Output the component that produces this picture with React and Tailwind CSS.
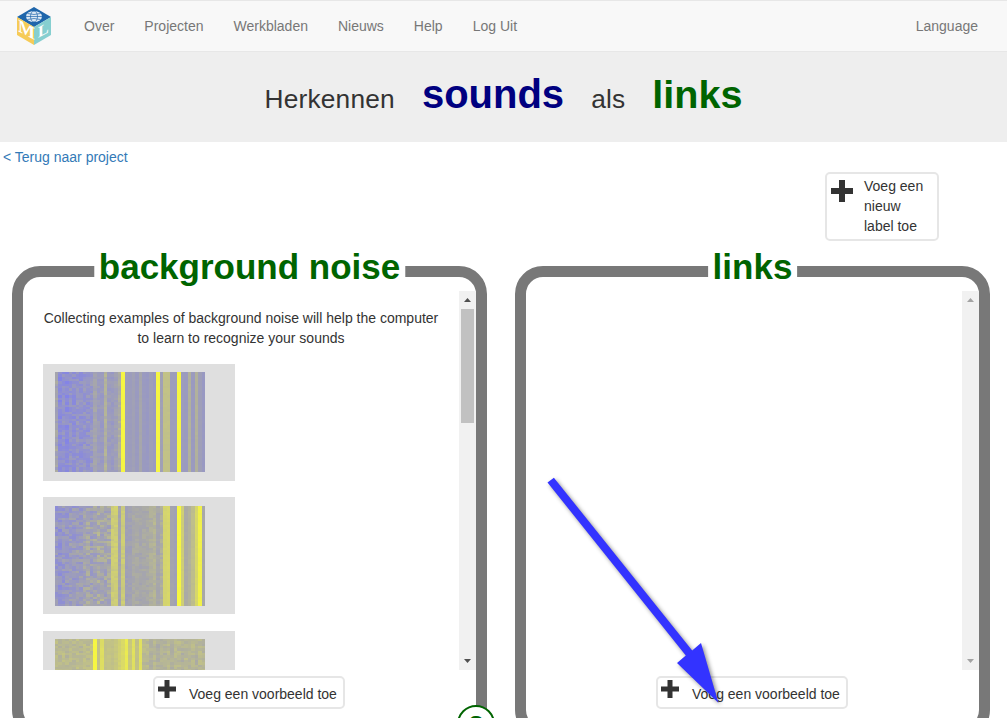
import React from "react";

const FONT = { fontFamily: '"Liberation Sans", Arial, sans-serif' };

function mulberry(seed) {
  let a = seed;
  return () => {
    a = (a + 0x6d2b79f5) | 0;
    let t = Math.imul(a ^ (a >>> 15), 1 | a);
    t = (t + Math.imul(t ^ (t >>> 7), 61 | t)) ^ t;
    return ((t ^ (t >>> 14)) >>> 0) / 4294967296;
  };
}

function mix(t) {
  t = Math.max(0, Math.min(1, t));
  const lo = [120, 120, 250];
  const mid = [168, 168, 168];
  const hi = [246, 246, 66];
  const [a, b, k] = t < 0.5 ? [lo, mid, t * 2] : [mid, hi, (t - 0.5) * 2];
  const c = a.map((v, i) => Math.round(v + (b[i] - v) * k));
  return `rgb(${c[0]},${c[1]},${c[2]})`;
}

const SPECS = [
  {
    seed: 11,
    cols: [0.46, 0.22, 0.28, 0.22, 0.3, 0.26, 0.32, 0.28, 0.32, 0.3, 0.34, 0.46, 0.38, 0.36, 0.56, 0.38, 0.36, 0.42, 0.54, 1, 0.4, 0.38, 0.42, 0.36, 0.48, 0.36, 0.34, 0.4, 0.36, 1, 0.42, 0.66, 0.66, 0.38, 0.38, 1, 0.38, 0.36, 0.56, 0.36, 0.56, 0.4, 0.34],
    noise: (i) => (i < 11 ? 0.2 : i < 19 ? 0.1 : 0.02),
  },
  {
    seed: 23,
    cols: [0.32, 0.3, 0.34, 0.34, 0.38, 0.36, 0.4, 0.38, 0.44, 0.46, 0.42, 0.46, 0.5, 0.48, 0.46, 0.48, 0.72, 0.74, 0.46, 0.72, 0.42, 0.44, 0.5, 0.5, 0.48, 0.5, 0.5, 0.54, 0.58, 0.48, 0.54, 0.78, 0.8, 0.46, 0.42, 1, 0.74, 0.52, 0.56, 0.64, 0.8, 0.96, 0.5],
    noise: (i) => (i < 16 ? 0.24 : i < 31 ? 0.08 : 0.02),
  },
  {
    seed: 37,
    cols: [0.62, 0.6, 0.63, 0.6, 0.62, 0.6, 0.63, 0.6, 0.63, 0.62, 0.64, 1, 0.66, 0.84, 0.66, 0.68, 0.66, 0.7, 0.76, 0.82, 0.92, 0.7, 0.86, 0.66, 0.86, 0.62, 0.6, 0.56, 0.6, 0.54, 0.58, 0.56, 0.6, 0.56, 0.6, 0.6, 0.56, 0.6, 0.58, 0.6, 0.56, 0.6, 0.58],
    noise: (i) => (i < 11 ? 0.1 : i < 25 ? 0.03 : 0.1),
  },
];

function Spectrogram({ spec }) {
  const rand = mulberry(spec.seed);
  const rects = [];
  const w = 150 / 43;
  const h = 100 / 43;
  for (let c = 0; c < 43; c++) {
    for (let r = 0; r < 43; r++) {
      const t = spec.cols[c] + (rand() - 0.5) * spec.noise(c);
      rects.push(
        <rect key={`${c}-${r}`} x={c * w} y={r * h} width={w + 0.2} height={h + 0.2} fill={mix(t)} />
      );
    }
  }
  return (
    <svg width="150" height="100" viewBox="0 0 150 100" className="block" shapeRendering="crispEdges">
      {rects}
    </svg>
  );
}

function Plus({ size, thick }) {
  const a = (size - thick) / 2;
  return (
    <svg width={size} height={size} viewBox={`0 0 ${size} ${size}`} className="block shrink-0">
      <rect x={a} y="0" width={thick} height={size} fill="#333" />
      <rect x="0" y={a} width={size} height={thick} fill="#333" />
    </svg>
  );
}

function AddExample() {
  return (
    <button className="w-[192px] h-[33px] -ml-[1px] bg-white border-2 border-[#e6e6e6] rounded-[5px] flex items-start pl-[3px] text-[14px] text-[#333] leading-5">
      <span className="mt-[2px]">
        <Plus size={18} thick={5} />
      </span>
      <span className="ml-[13px] mt-[6px] whitespace-nowrap">Voeg een voorbeeld toe</span>
    </button>
  );
}

function Arrow({ up, dark }) {
  return (
    <svg width="7" height="4" viewBox="0 0 7 4" className="block">
      <polygon points={up ? "3.5,0 7,4 0,4" : "0,0 7,0 3.5,4"} fill={dark ? "#505050" : "#a3a3a3"} />
    </svg>
  );
}

function Scrollbar({ thumb }) {
  return (
    <div className="w-[17px] h-full bg-[#f1f1f1] flex flex-col items-center shrink-0">
      <div className="h-[18px] pt-[7px]">
        <Arrow up dark={thumb} />
      </div>
      <div className="flex-1 w-[13px]">
        {thumb && <div className="w-[13px] h-[114px] bg-[#c1c1c1]" />}
      </div>
      <div className="h-[18px] pt-[7px]">
        <Arrow dark={thumb} />
      </div>
    </div>
  );
}

function Panel({ title, children, thumb }) {
  return (
    <div className="relative h-[472px] border-[11px] border-[#787878] rounded-[28px] flex flex-col items-center">
      <h2 className="absolute left-1/2 -translate-x-1/2 -top-[30px] bg-white px-[5px] text-[35px] leading-[40px] font-bold text-[#006400] whitespace-nowrap">
        {title}
      </h2>
      <div className="mt-[14px] h-[379px] w-full flex overflow-hidden">
        <div className="flex-1 h-full overflow-hidden">{children}</div>
        <Scrollbar thumb={thumb} />
      </div>
      <div className="mt-[6px]">
        <AddExample />
      </div>
    </div>
  );
}

function Sample({ spec, box }) {
  return (
    <div className={`w-[192px] h-[117px] bg-[#dfdfdf] pl-[12px] ${box}`}>
      <Spectrogram spec={spec} />
    </div>
  );
}

function Logo() {
  return (
    <svg width="34" height="38" viewBox="0 0 34 38" className="block shrink-0">
      <polygon points="17,0 34,10 17,20 0,10" fill="#1f66ab" />
      <polygon points="0,10 17,20 17,38 0,28" fill="#f6cb57" />
      <polygon points="34,10 17,20 17,38 34,28" fill="#86cfd0" />
      <ellipse cx="17" cy="9.5" rx="8" ry="5.5" fill="#dbe8f4" />
      <g stroke="#1f66ab" strokeWidth="0.7" fill="none">
        <ellipse cx="17" cy="9.5" rx="3.5" ry="5.5" />
        <line x1="9" y1="9.5" x2="25" y2="9.5" />
        <path d="M10.5 6.5 Q17 8.5 23.5 6.5" />
        <path d="M10.5 12.5 Q17 10.5 23.5 12.5" />
      </g>
      <text
        transform="translate(1 24) skewY(28)"
        fontFamily='"Liberation Serif", serif'
        fontWeight="700"
        fontSize="18"
        fill="#fff"
      >
        M
      </text>
      <text
        transform="translate(21 31) skewY(-28)"
        fontFamily='"Liberation Serif", serif'
        fontWeight="700"
        fontSize="16"
        fill="#fff"
      >
        L
      </text>
    </svg>
  );
}

export default function App() {
  const links = ["Over", "Projecten", "Werkbladen", "Nieuws", "Help", "Log Uit"];
  return (
    <div className="relative h-[718px] overflow-hidden bg-white text-[14px] leading-5 text-[#333]" style={FONT}>
      <nav className="h-[52px] bg-[#f8f8f8] border-y border-[#e7e7e7] flex items-center pl-[17px]">
        <Logo />
        <div className="ml-[18px] flex">
          {links.map((l) => (
            <a key={l} className="px-[15px] text-[#777]">
              {l}
            </a>
          ))}
        </div>
        <a className="ml-auto mr-[29px] text-[#777]">Language</a>
      </nav>

      <header className="h-[90px] bg-[#eeeeee] flex items-baseline justify-center gap-[27px] pt-[16px]">
        <span className="text-[26.3px] tracking-[0.2px] leading-[52px]">Herkennen</span>
        <span className="text-[40px] leading-[52px] font-bold text-[#000080]">sounds</span>
        <span className="text-[26.3px] tracking-[0.2px] leading-[52px]">als</span>
        <span className="text-[39.6px] leading-[52px] font-bold text-[#006400]">links</span>
      </header>

      <div className="pl-[3px] pt-[5px]">
        <a className="text-[#337ab7]">&lt; Terug naar project</a>
      </div>

      <div className="flex justify-end pr-[68px] mt-[5px]">
        <button className="w-[114px] h-[69px] bg-white border-2 border-[#e6e6e6] rounded-[5px] flex items-start text-left pl-[4px]">
          <span className="mt-[6px]">
            <Plus size={22} thick={6} />
          </span>
          <span className="ml-[11px] mt-[2px] w-[70px] leading-5 text-[#333]">
            Voeg een nieuw label toe
          </span>
        </button>
      </div>

      <div className="grid grid-cols-[475px_475px] gap-[28px] pl-[12px] mt-[25px]">
        <Panel title="background noise" thumb>
          <div className="pt-[17px] pl-[20px]">
            <p className="w-[397px] -ml-[0.5px] text-center">
              Collecting examples of background noise will help the computer to learn to recognize your sounds
            </p>
            <div className="mt-[16px]">
              <Sample spec={SPECS[0]} box="pt-[8px] mb-[16px]" />
              <Sample spec={SPECS[1]} box="pt-[9px] mb-[17px]" />
              <Sample spec={SPECS[2]} box="pt-[8px]" />
            </div>
          </div>
        </Panel>
        <Panel title="links" />
      </div>

      <div className="absolute left-[457px] top-[705px] w-[38px] h-[38px] rounded-full bg-white border-2 border-[#006400] flex justify-center">
        <span className="text-[26px] leading-[36px] font-bold text-[#006400]">?</span>
      </div>

      <svg
        width="200"
        height="250"
        viewBox="0 0 200 250"
        className="absolute left-[540px] top-[470px] drop-shadow-[2px_2px_2px_rgba(0,0,0,0.45)]"
      >
        <polygon
          points="7.5,12.5 13.9,7.7 152.2,180.6 161,173 178.5,233 137,193 145.8,185.4"
          fill="#3333ff"
        />
      </svg>
    </div>
  );
}
